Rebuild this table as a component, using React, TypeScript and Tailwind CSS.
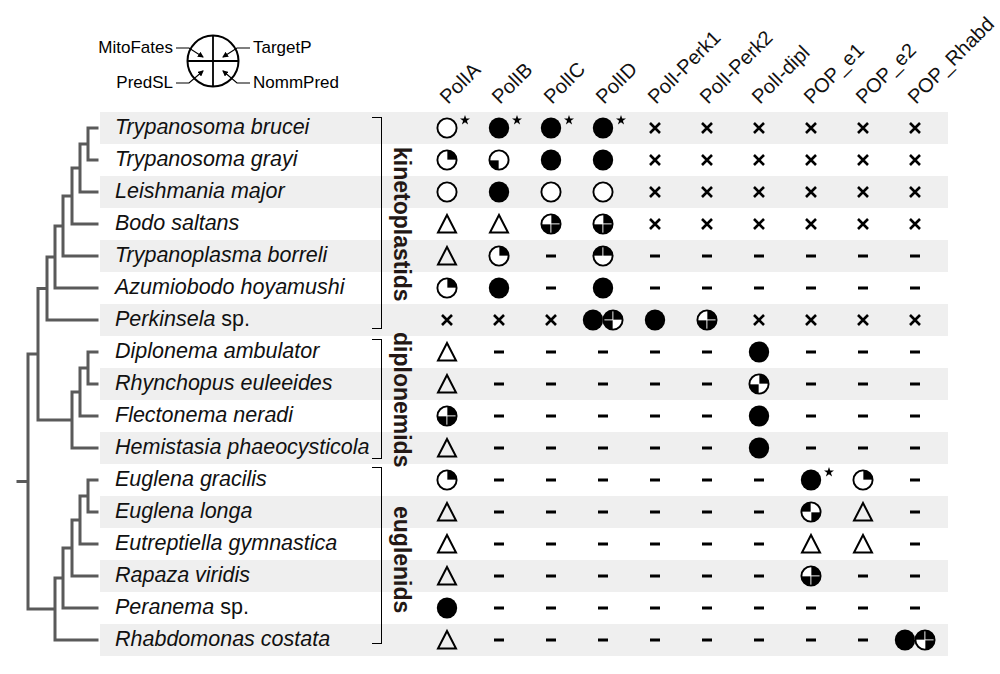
import React from 'react';

const COLS = ['PolIA', 'PolIB', 'PolIC', 'PolID', 'PolI-Perk1', 'PolI-Perk2', 'PolI-dipl', 'POP_e1', 'POP_e2', 'POP_Rhabd'];

// O empty circle, F full, T triangle, X absent, - no data, qTLTRBLBR quadrant fill, P<q> pair, * = star
const ROWS: { name: string; sp?: boolean; cells: string[] }[] = [
  { name: 'Trypanosoma brucei', cells: ['O*', 'F*', 'F*', 'F*', 'X', 'X', 'X', 'X', 'X', 'X'] },
  { name: 'Trypanosoma grayi', cells: ['q0100', 'q0010', 'F', 'F', 'X', 'X', 'X', 'X', 'X', 'X'] },
  { name: 'Leishmania major', cells: ['O', 'F', 'O', 'O', 'X', 'X', 'X', 'X', 'X', 'X'] },
  { name: 'Bodo saltans', cells: ['T', 'T', 'q0111', 'q0111', 'X', 'X', 'X', 'X', 'X', 'X'] },
  { name: 'Trypanoplasma borreli', cells: ['T', 'q0100', '-', 'q1100', '-', '-', '-', '-', '-', '-'] },
  { name: 'Azumiobodo hoyamushi', cells: ['q0100', 'F', '-', 'F', '-', '-', '-', '-', '-', '-'] },
  { name: 'Perkinsela', sp: true, cells: ['X', 'X', 'X', 'P1110', 'F', 'q0111', 'X', 'X', 'X', 'X'] },
  { name: 'Diplonema ambulator', cells: ['T', '-', '-', '-', '-', '-', 'F', '-', '-', '-'] },
  { name: 'Rhynchopus euleeides', cells: ['T', '-', '-', '-', '-', '-', 'q0110', '-', '-', '-'] },
  { name: 'Flectonema neradi', cells: ['q0111', '-', '-', '-', '-', '-', 'F', '-', '-', '-'] },
  { name: 'Hemistasia phaeocysticola', cells: ['T', '-', '-', '-', '-', '-', 'F', '-', '-', '-'] },
  { name: 'Euglena gracilis', cells: ['q0100', '-', '-', '-', '-', '-', '-', 'F*', 'q0100', '-'] },
  { name: 'Euglena longa', cells: ['T', '-', '-', '-', '-', '-', '-', 'q1001', 'T', '-'] },
  { name: 'Eutreptiella gymnastica', cells: ['T', '-', '-', '-', '-', '-', '-', 'T', 'T', '-'] },
  { name: 'Rapaza viridis', cells: ['T', '-', '-', '-', '-', '-', '-', 'q0111', '-', '-'] },
  { name: 'Peranema', sp: true, cells: ['F', '-', '-', '-', '-', '-', '-', '-', '-', '-'] },
  { name: 'Rhabdomonas costata', cells: ['T', '-', '-', '-', '-', '-', '-', '-', '-', 'P1101'] },
];

const GROUPS = [
  { label: 'kinetoplastids', box: 'h-[224px]', bracket: 'mt-[5px] mb-[7px]' },
  { label: 'diplonemids', box: 'h-[128px]', bracket: 'mt-[3px] mb-[5px]' },
  { label: 'euglenids', box: 'h-[192px]', bracket: 'mt-[3px] mb-[12px]' },
];

const QUADS = [
  'M12 12 L12 2 A10 10 0 0 0 2 12 Z',
  'M12 12 L22 12 A10 10 0 0 0 12 2 Z',
  'M12 12 L2 12 A10 10 0 0 0 12 22 Z',
  'M12 12 L12 22 A10 10 0 0 0 22 12 Z',
];

function Pie({ q }: { q: string }) {
  return (
    <>
      <circle cx="12" cy="12" r="9.6" fill="#fff" />
      {QUADS.map((d, i) => (q[i] === '1' ? <path key={i} d={d} fill="#000" stroke="#fff" strokeWidth="0.7" /> : null))}
      <circle cx="12" cy="12" r="9.6" fill="none" stroke="#000" strokeWidth="1.9" />
    </>
  );
}

function Star() {
  return (
    <svg className="absolute left-[25px] top-[-1px]" width="10" height="10" viewBox="0 0 10 10">
      <polygon points="5,0 6.2,3.6 10,3.6 6.9,5.8 8.1,9.5 5,7.2 1.9,9.5 3.1,5.8 0,3.6 3.8,3.6" fill="#000" />
    </svg>
  );
}

function Mark({ code }: { code: string }) {
  const star = code.endsWith('*');
  const c = star ? code.slice(0, -1) : code;

  if (c[0] === 'P') {
    return (
      <svg width="44" height="24" viewBox="0 0 44 24">
        <ellipse cx="12" cy="12" rx="10.2" ry="10.6" fill="#000" />
        <g transform="translate(20 0)">
          <Pie q={c.slice(1)} />
        </g>
      </svg>
    );
  }

  let g: React.ReactNode = null;
  if (c === 'F') g = <ellipse cx="12" cy="12" rx="10.2" ry="10.6" fill="#000" />;
  else if (c === 'O') g = <circle cx="12" cy="12" r="9.6" fill="#fff" stroke="#000" strokeWidth="1.9" />;
  else if (c === 'T') g = <polygon points="12,3 21,20.5 3,20.5" fill="none" stroke="#000" strokeWidth="2" strokeLinejoin="miter" />;
  else if (c === 'X')
    g = <path d="M7 7 L17 17 M17 7 L7 17" stroke="#000" strokeWidth="2.6" />;
  else if (c === '-') g = <rect x="7" y="10.5" width="10" height="3" fill="#000" />;
  else if (c[0] === 'q') g = <Pie q={c.slice(1)} />;

  return (
    <div className="relative flex">
      <svg width="24" height="24" viewBox="0 0 24 24">
        {g}
      </svg>
      {star && <Star />}
    </div>
  );
}

function Legend() {
  return (
    <div className="flex pl-[95px] pt-[25px] text-[17px] leading-[20px] text-black">
      <div className="flex w-[78px] flex-col items-end gap-[15px] pt-[13px]">
        <span>MitoFates</span>
        <span>PredSL</span>
      </div>
      <svg width="80" height="70" viewBox="0 0 80 70">
        <defs>
          <marker id="ah" markerUnits="userSpaceOnUse" markerWidth="6" markerHeight="6" refX="5" refY="3" orient="auto">
            <path d="M0 0 L6 3 L0 6 Z" fill="#000" />
          </marker>
        </defs>
        <circle cx="40" cy="36" r="25.5" fill="#fff" stroke="#000" strokeWidth="2" />
        <path d="M40 10.5 V61.5 M14.5 36 H65.5" stroke="#000" strokeWidth="1.8" />
        <g stroke="#000" strokeWidth="1.2" fill="none">
          <path d="M3 23 H16 L30 32" markerEnd="url(#ah)" />
          <path d="M77 23 H64 L50 32" markerEnd="url(#ah)" />
          <path d="M3 58 H16 L30 46" markerEnd="url(#ah)" />
          <path d="M77 58 H64 L50 46" markerEnd="url(#ah)" />
        </g>
      </svg>
      <div className="flex flex-col gap-[15px] pt-[13px]">
        <span>TargetP</span>
        <span>NommPred</span>
      </div>
    </div>
  );
}

function Tree() {
  const d = [
    // leaves
    'M88 16 H97 M88 48 H97 M88 240 H97 M88 272 H97 M88 368 H97 M88 400 H97',
    'M80 80 H97 M80 304 H97 M80 432 H97',
    'M72 112 H97 M72 336 H97 M72 464 H97',
    'M63 144 H97 M63 496 H97',
    'M55 176 H97 M55 528 H97',
    'M47 208 H97',
    // internal
    'M80 32 H88 M80 256 H88 M80 384 H88',
    'M72 56 H80 M72 280 H80 M72 408 H80',
    'M63 84 H72 M63 436 H72',
    'M55 114 H63 M55 466 H63',
    'M47 145 H55',
    'M38 176.5 H47',
    'M38 308 H72',
    'M28 242 H38',
    'M28 497 H55',
    'M18 369.5 H28',
    // verticals
    'M88 16 V48 M88 240 V272 M88 368 V400',
    'M80 32 V80 M80 256 V304 M80 384 V432',
    'M72 56 V112 M72 280 V336 M72 408 V464',
    'M63 84 V144 M63 436 V496',
    'M55 114 V176 M55 466 V528',
    'M47 145 V208',
    'M38 176.5 V308',
    'M28 242 V497',
  ].join(' ');
  return (
    <svg width="100" height="544" viewBox="0 0 100 544" className="shrink-0">
      <path d={d} stroke="#5a5a5a" strokeWidth="3" fill="none" strokeLinecap="square" />
    </svg>
  );
}

export default function App() {
  return (
    <div className="h-[674px] w-[1000px] overflow-hidden bg-white font-['Liberation_Sans',Arial,sans-serif] text-[#111]">
      {/* header: legend + rotated column names */}
      <div className="flex h-[112px]">
        <div className="w-[421px] shrink-0">
          <Legend />
        </div>
        {COLS.map((c) => (
          <div key={c} className="flex w-[52px] shrink-0 items-end pb-[5px] pl-[29px]">
            <span className="block origin-bottom-left -rotate-45 whitespace-nowrap text-[20px] leading-none">{c}</span>
          </div>
        ))}
      </div>

      {/* body */}
      <div className="flex">
        <Tree />
        <div className="flex w-[848px] bg-[repeating-linear-gradient(to_bottom,#efefef_0px,#efefef_32px,#ffffff_32px,#ffffff_64px)]">
          <div className="flex w-[270px] shrink-0 flex-col">
            {ROWS.map((r) => (
              <div key={r.name} className="flex h-[32px] items-center pl-[15px] text-[21.5px] leading-none">
                <span className="italic">{r.name}</span>
                {r.sp && <span>&nbsp;sp.</span>}
              </div>
            ))}
          </div>

          <div className="flex w-[51px] shrink-0 flex-col">
            {GROUPS.map((g) => (
              <div key={g.label} className={`flex ${g.box}`}>
                <div className={`ml-[2px] w-[10px] border-y-[1.5px] border-r-[1.5px] border-black ${g.bracket}`} />
                <div className="flex flex-1 items-center justify-center">
                  <span className="whitespace-nowrap text-[23px] font-bold leading-none text-[#231815] [writing-mode:vertical-rl]">
                    {g.label}
                  </span>
                </div>
              </div>
            ))}
          </div>

          <div className="flex w-[520px] shrink-0 flex-col">
            {ROWS.map((r) => (
              <div key={r.name} className="flex h-[32px]">
                {r.cells.map((c, i) => (
                  <div key={i} className="flex w-[52px] shrink-0 items-center justify-center">
                    <Mark code={c} />
                  </div>
                ))}
              </div>
            ))}
          </div>
        </div>
      </div>
    </div>
  );
}
